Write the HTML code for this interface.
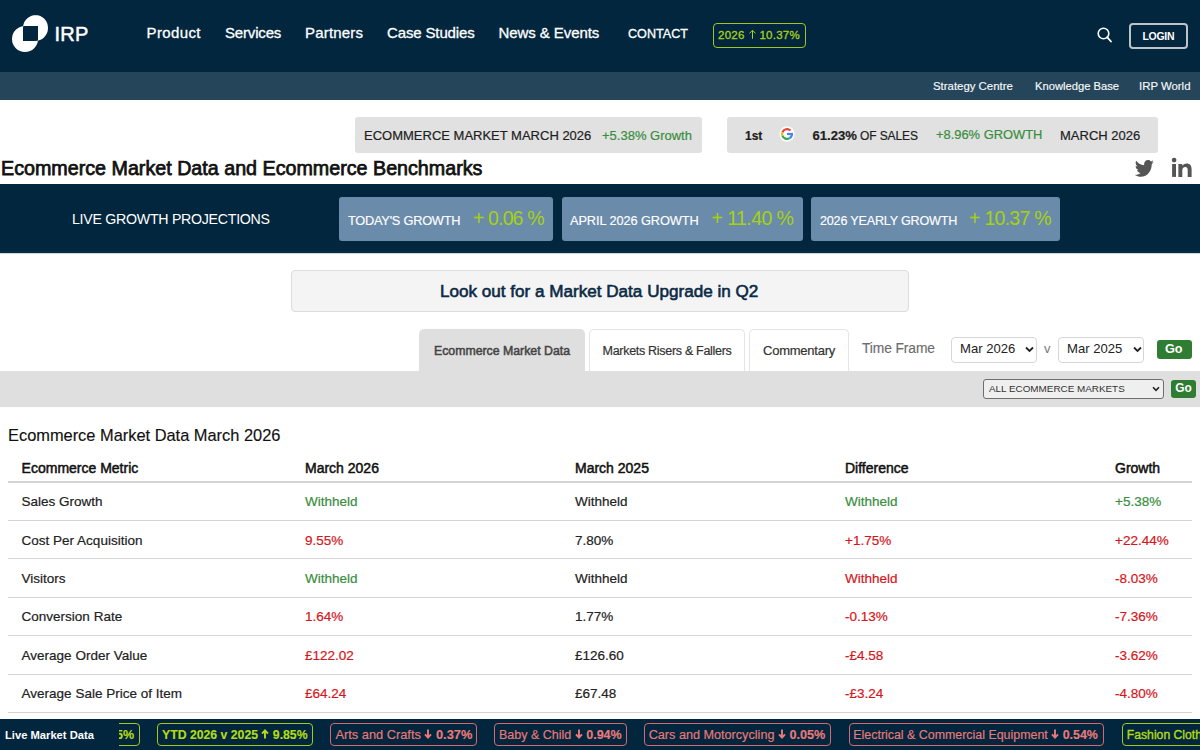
<!DOCTYPE html>
<html><head><meta charset="utf-8">
<style>
*{box-sizing:border-box;margin:0;padding:0}
html,body{width:1200px;height:750px;overflow:hidden;background:#fff;font-family:"Liberation Sans",sans-serif;position:relative}
.a{position:absolute;white-space:nowrap;line-height:1}
#hdr{position:absolute;left:0;top:0;width:1200px;height:72px;background:#02263d}
#sub{position:absolute;left:0;top:72px;width:1200px;height:28px;background:#25465a}
.nav{color:#fff;font-size:15px;top:24.6px;-webkit-text-stroke:0.3px #fff}
.subn{color:#f4f6f8;font-size:11.4px;top:81px;-webkit-text-stroke:0.15px #fff}
.tbox{position:absolute;top:117px;height:36px;background:#e1e1e1;border-radius:3px}
.tk{font-size:13px;color:#1e1e1e;top:129px;-webkit-text-stroke:0.2px currentColor}
.grn{color:#388e3c}
#band{position:absolute;left:0;top:184px;width:1200px;height:69px;background:#02263d}
.gbox{position:absolute;top:197px;height:44px;background:#6b8bab;border-radius:3px}
.glab{color:#fff;font-size:13px;top:215px;-webkit-text-stroke:0.15px #fff}
.gval{color:#a6d20f;font-size:18.3px;top:211px}
#banner{position:absolute;left:291px;top:270px;width:618px;height:42px;background:#f4f4f4;border:1px solid #dcdcdc;border-radius:4px}
.tab{position:absolute;top:329px;height:42px;background:#fff;border:1px solid #e4e4e4;border-bottom:none;border-radius:5px 5px 0 0}
.tabt{font-size:12.6px;color:#333;top:345px;-webkit-text-stroke:0.2px currentColor}
#gray{position:absolute;left:0;top:371px;width:1200px;height:36px;background:#dfdfdf}
.sel{position:absolute;background:#fff;border:1px solid #d6d6d6;border-radius:4px}
.go{position:absolute;background:#2e7d32;border-radius:3px}
.th{font-size:14px;-webkit-text-stroke:0.5px #111;color:#111;top:461px}
.td{font-size:13.5px;color:#222;-webkit-text-stroke:0.2px currentColor}
.red{color:#d5161c}
.g2{color:#3a8d3e}
.rl{position:absolute;left:8px;width:1184px;height:1px;background:#d4d4d4}
#tick{position:absolute;left:0;top:719px;width:1200px;height:31px;background:#02263d}
.pill{position:absolute;top:723px;height:23px;border:1px solid #a6c81c;border-radius:4px}
.pt{font-size:12.5px;top:729px;-webkit-text-stroke:0.15px currentColor}
.pk{border-color:#d9686e}
.ar{display:inline-block;vertical-align:0px}
.lime{color:#b4dc14}
.pink{color:#ea7a7a}
</style></head><body>
<div id="hdr"></div>
<div id="sub"></div>
<!-- logo -->
<svg class="a" style="left:0;top:0" width="100" height="70" viewBox="0 0 100 70">
<path fill="#fff" fill-rule="evenodd" d="M23,41 L23,28 A13,13 0 0 1 36,15 L35.5,15 A12.5,13 0 0 1 48,28 A13,13 0 0 1 35,41 Z M12,39 A13,13 0 0 1 25,26 L38,26 L38,39 A13,13 0 0 1 25,52 A13,13 0 0 1 12,39 Z"/>
</svg>
<div class="a" style="left:54.5px;top:24px;color:#fff;font-size:20px;letter-spacing:0.2px;-webkit-text-stroke:0.5px #fff">IRP</div>
<div class="a nav" style="left:146.5px;letter-spacing:0.38px">Product</div>
<div class="a nav" style="left:225px;letter-spacing:-0.17px">Services</div>
<div class="a nav" style="left:305px;letter-spacing:0.19px">Partners</div>
<div class="a nav" style="left:387px;letter-spacing:-0.14px">Case Studies</div>
<div class="a nav" style="left:498.5px;letter-spacing:-0.08px">News &amp; Events</div>
<div class="a nav" style="left:628px;font-size:12.6px;top:28.3px">CONTACT</div>
<div class="a" style="left:713px;top:23px;width:93px;height:25px;border:1.2px solid #a2c41c;border-radius:4px"></div>
<div class="a" style="left:718px;top:29.4px;color:#a8d11a;font-size:11.5px;letter-spacing:0.25px;-webkit-text-stroke:0.3px #a8d11a">2026 <svg class="ar" width="8" height="10" viewBox="0 0 8 10" style="vertical-align:-0.5px"><path d="M4.5,9.8V1.4M1.5,4.4L4.5,1.3L7.5,4.4" fill="none" stroke="currentColor" stroke-width="1"/></svg> 10.37%</div>
<svg class="a" style="left:1095px;top:24.5px" width="20" height="20" viewBox="0 0 20 20"><circle cx="8.5" cy="8.5" r="5.3" fill="none" stroke="#fff" stroke-width="1.6"/><path d="M12.3,12.3 L16,16.5" stroke="#fff" stroke-width="1.8" stroke-linecap="round"/></svg>
<div class="a" style="left:1129px;top:23px;width:59px;height:25.5px;border:2px solid #bcc4ca;border-radius:4px"></div>
<div class="a" style="left:1142.5px;top:31px;color:#fff;font-size:10.5px;letter-spacing:-0.3px;font-weight:700">LOGIN</div>
<div class="a subn" style="left:933px">Strategy Centre</div>
<div class="a subn" style="left:1035px;font-size:11.2px">Knowledge Base</div>
<div class="a subn" style="left:1139px">IRP World</div>

<!-- ticker boxes -->
<div class="tbox" style="left:355px;width:347px"></div>
<div class="a tk" style="left:364px">ECOMMERCE MARKET MARCH 2026</div>
<div class="a tk grn" style="left:602px">+5.38% Growth</div>
<div class="tbox" style="left:727px;width:431px"></div>
<div class="a tk" style="left:745px;font-weight:700;font-size:12px;top:129.8px">1st</div>
<svg class="a" style="left:779.4px;top:126px" width="16" height="16" viewBox="0 0 16 16"><circle cx="8" cy="8" r="7.7" fill="#fff"/>
<path d="M3.40,6.32 A4.9,4.9 0 0 1 11.46,4.54" fill="none" stroke="#EA4335" stroke-width="2.2"/>
<path d="M3.40,9.68 A4.9,4.9 0 0 1 3.40,6.32" fill="none" stroke="#FBBC05" stroke-width="2.2"/>
<path d="M10.45,12.24 A4.9,4.9 0 0 1 3.40,9.68" fill="none" stroke="#34A853" stroke-width="2.2"/>
<path d="M12.9,7.9 A4.9,4.9 0 0 1 10.45,12.24" fill="none" stroke="#4285F4" stroke-width="2.2"/>
<rect x="8" y="6.9" width="6" height="2.2" fill="#4285F4"/>
</svg>
<div class="a tk" style="left:812.5px;font-weight:700;font-size:13.1px;top:128.9px">61.23%</div>
<div class="a tk" style="left:860px;font-size:12px;top:129.8px;letter-spacing:-0.1px">OF SALES</div>
<div class="a tk grn" style="left:936px;font-size:12.9px">+8.96% GROWTH</div>
<div class="a tk" style="left:1060px">MARCH 2026</div>

<div class="a" style="left:1px;top:158.9px;font-size:19.7px;-webkit-text-stroke:0.75px #111;color:#111">Ecommerce Market Data and Ecommerce Benchmarks</div>

<svg class="a" style="left:1135.4px;top:158px" width="19.2" height="21" viewBox="0 0 24 24" preserveAspectRatio="none"><path fill="#555" d="M23.6,4.6c-.9.4-1.8.6-2.8.8 1-.6 1.8-1.5 2.1-2.7-.9.6-2,1-3.1,1.2C18.9,2.9 17.6,2.3 16.2,2.3c-2.7,0-4.8,2.2-4.8,4.8 0,.4,0,.8.1,1.1C7.4,8 3.9,6.1 1.5,3.1c-.4.7-.7,1.6-.7,2.4 0,1.7.9,3.2,2.2,4-.8,0-1.5-.2-2.2-.6v.1c0,2.3 1.7,4.3 3.9,4.7-.4.1-.8.2-1.3.2-.3,0-.6,0-.9-.1.6,1.9 2.4,3.3 4.5,3.4-1.7,1.3-3.7,2.1-6,2.1-.4,0-.8,0-1.2-.1 2.1,1.4 4.7,2.2 7.4,2.2 8.9,0 13.7-7.4 13.7-13.7v-.6c1-.7 1.8-1.5 2.4-2.5z"/></svg>
<svg class="a" style="left:1168px;top:155px" width="28" height="25" viewBox="0 0 28 25"><circle cx="6.1" cy="5.1" r="2.35" fill="#555"/><rect x="4.1" y="9" width="3.9" height="12.9" fill="#555"/><path fill="#555" d="M10.4,9 H14.2 V10.8 C15,9.3 16.5,8.4 18.6,8.4 C22,8.4 23.6,10.5 23.6,14.3 V21.9 H19.7 V15 C19.7,13.2 19.1,11.9 17.4,11.9 C15.6,11.9 14.3,13.1 14.3,15.2 V21.9 H10.4 Z"/></svg>
<div id="band"></div>
<div class="a" style="left:0;top:251px;width:1200px;height:2px;background:#062a44"></div>
<div class="a" style="left:0;top:253px;width:1200px;height:1px;background:#d2d8da"></div>
<div class="a" style="left:72px;top:212px;color:#fff;font-size:14.2px;letter-spacing:-0.28px">LIVE GROWTH PROJECTIONS</div>
<div class="gbox" style="left:339px;width:214px"></div>
<div class="gbox" style="left:562px;width:241px"></div>
<div class="gbox" style="left:811px;width:249px"></div>
<div class="a glab" style="left:348px;font-size:13.2px;letter-spacing:-0.25px;top:215.3px;font-size:12.8px">TODAY'S GROWTH</div>
<div class="a gval" style="left:473px;font-size:19.6px;letter-spacing:-0.9px;top:209.4px">+ 0.06 %</div>
<div class="a glab" style="left:570px;font-size:13.2px;letter-spacing:-0.1px;top:215.3px;font-size:12.8px">APRIL 2026 GROWTH</div>
<div class="a gval" style="left:711.5px;font-size:19.6px;letter-spacing:-0.6px;top:209.4px">+ 11.40 %</div>
<div class="a glab" style="left:820px;font-size:13.2px;letter-spacing:-0.2px;top:215.3px;font-size:12.6px">2026 YEARLY GROWTH</div>
<div class="a gval" style="left:969px;font-size:19.6px;letter-spacing:-0.75px;top:209.4px">+ 10.37 %</div>

<div id="banner"></div>
<div class="a" style="left:440px;top:283.3px;font-size:17.1px;-webkit-text-stroke:0.6px #0b2a45;color:#0b2a45">Look out for a Market Data Upgrade in Q2</div>

<div id="gray"></div>
<div class="tab" style="left:419px;width:166px;background:#dfdfdf;border-color:#dfdfdf"></div>
<div class="tab" style="left:589px;width:156px"></div>
<div class="tab" style="left:749px;width:100px"></div>
<div class="a tabt" style="left:434px;font-size:12.3px;color:#444;-webkit-text-stroke:0.5px #444;top:345.3px">Ecommerce Market Data</div>
<div class="a tabt" style="left:602.6px;font-size:12.5px;letter-spacing:-0.3px;top:344.6px">Markets Risers &amp; Fallers</div>
<div class="a tabt" style="left:763px;font-size:13px;letter-spacing:-0.24px;top:344.3px">Commentary</div>
<div class="a" style="left:862px;top:341.6px;font-size:13.8px;letter-spacing:-0.1px;color:#6c6c6c;-webkit-text-stroke:0.15px #6c6c6c">Time Frame</div>
<div class="sel" style="left:951px;top:336.5px;width:86px;height:26px"></div>
<div class="a" style="left:960px;top:342px;font-size:13.1px;color:#222">Mar 2026</div>
<svg class="a" style="left:1025px;top:346px" width="9" height="7" viewBox="0 0 9 7"><path d="M1,1.5 L4.5,5 L8,1.5" fill="none" stroke="#222" stroke-width="1.8"/></svg>
<div class="a" style="left:1044px;top:342px;font-size:13px;color:#777">v</div>
<div class="sel" style="left:1058px;top:336.5px;width:86px;height:26px"></div>
<div class="a" style="left:1067px;top:342px;font-size:13.1px;color:#222">Mar 2025</div>
<svg class="a" style="left:1132.5px;top:346px" width="9" height="7" viewBox="0 0 9 7"><path d="M1,1.5 L4.5,5 L8,1.5" fill="none" stroke="#222" stroke-width="1.8"/></svg>
<div class="go" style="left:1157px;top:340px;width:35px;height:19px"></div>
<div class="a" style="left:1165px;top:343px;font-size:12.7px;font-weight:700;color:#fff">Go</div>
<div class="a" style="left:982.5px;top:379px;width:181px;height:20px;background:#efefef;border:1.3px solid #6e6e6e;border-radius:3px"></div>
<div class="a" style="left:989px;top:384px;font-size:9.9px;color:#333">ALL ECOMMERCE MARKETS</div>
<svg class="a" style="left:1152px;top:386px" width="8" height="6" viewBox="0 0 8 6"><path d="M1,1.2 L4,4.3 L7,1.2" fill="none" stroke="#222" stroke-width="1.6"/></svg>
<div class="go" style="left:1171px;top:380px;width:25px;height:18px"></div>
<div class="a" style="left:1175.3px;top:383.3px;font-size:11.9px;font-weight:700;color:#fff">Go</div>

<div class="a" style="left:8px;top:426.8px;font-size:16.4px;color:#111;-webkit-text-stroke:0.15px #111">Ecommerce Market Data March 2026</div>
<div class="rl" style="top:481px;height:2px"></div>
<div class="a th" style="left:21.6px">Ecommerce Metric</div>
<div class="a th" style="left:305px">March 2026</div>
<div class="a th" style="left:575px">March 2025</div>
<div class="a th" style="left:845px">Difference</div>
<div class="a th" style="left:1115px">Growth</div>
<div class="a td" style="left:21.6px;top:495.2px">Sales Growth</div>
<div class="a td g2" style="left:305px;top:495.2px">Withheld</div>
<div class="a td " style="left:575px;top:495.2px">Withheld</div>
<div class="a td g2" style="left:845px;top:495.2px">Withheld</div>
<div class="a td g2" style="left:1115px;top:495.2px">+5.38%</div>
<div class="rl" style="top:520.0px"></div>
<div class="a td" style="left:21.6px;top:533.6px">Cost Per Acquisition</div>
<div class="a td red" style="left:305px;top:533.6px">9.55%</div>
<div class="a td " style="left:575px;top:533.6px">7.80%</div>
<div class="a td red" style="left:845px;top:533.6px">+1.75%</div>
<div class="a td red" style="left:1115px;top:533.6px">+22.44%</div>
<div class="rl" style="top:558.4px"></div>
<div class="a td" style="left:21.6px;top:572.0px">Visitors</div>
<div class="a td g2" style="left:305px;top:572.0px">Withheld</div>
<div class="a td " style="left:575px;top:572.0px">Withheld</div>
<div class="a td red" style="left:845px;top:572.0px">Withheld</div>
<div class="a td red" style="left:1115px;top:572.0px">-8.03%</div>
<div class="rl" style="top:596.8px"></div>
<div class="a td" style="left:21.6px;top:610.4px">Conversion Rate</div>
<div class="a td red" style="left:305px;top:610.4px">1.64%</div>
<div class="a td " style="left:575px;top:610.4px">1.77%</div>
<div class="a td red" style="left:845px;top:610.4px">-0.13%</div>
<div class="a td red" style="left:1115px;top:610.4px">-7.36%</div>
<div class="rl" style="top:635.2px"></div>
<div class="a td" style="left:21.6px;top:648.8px">Average Order Value</div>
<div class="a td red" style="left:305px;top:648.8px">£122.02</div>
<div class="a td " style="left:575px;top:648.8px">£126.60</div>
<div class="a td red" style="left:845px;top:648.8px">-£4.58</div>
<div class="a td red" style="left:1115px;top:648.8px">-3.62%</div>
<div class="rl" style="top:673.6px"></div>
<div class="a td" style="left:21.6px;top:687.2px">Average Sale Price of Item</div>
<div class="a td red" style="left:305px;top:687.2px">£64.24</div>
<div class="a td " style="left:575px;top:687.2px">£67.48</div>
<div class="a td red" style="left:845px;top:687.2px">-£3.24</div>
<div class="a td red" style="left:1115px;top:687.2px">-4.80%</div>
<div class="rl" style="top:712.0px"></div>

<div id="tick"></div>
<div class="pill" style="left:100px;width:40px"></div>
<div class="a pt lime" style="left:119px;width:40px;overflow:hidden;text-indent:-3px"><b>5%</b></div>
<div class="pill" style="left:157px;width:156px"></div>
<div class="a pt lime" style="left:162px;font-size:12.25px;top:729.3px"><b>YTD 2026 v 2025 <svg class="ar" width="8" height="10" viewBox="0 0 8 10"><path d="M4,9.6V1.6M1,4.6L4,1.4L7,4.6" fill="none" stroke="currentColor" stroke-width="1.9"/></svg> 9.85%</b></div>
<div class="pill pk" style="left:330px;width:147px"></div>
<div class="a pt pink" style="left:335.5px;font-size:12.8px;top:728.7px">Arts and Crafts <svg class="ar" width="8" height="10" viewBox="0 0 8 10"><path d="M4,0.4V8.4M1,5.4L4,8.6L7,5.4" fill="none" stroke="currentColor" stroke-width="1.9"/></svg> <b>0.37%</b></div>
<div class="pill pk" style="left:494px;width:133px"></div>
<div class="a pt pink" style="left:499px">Baby &amp; Child <svg class="ar" width="8" height="10" viewBox="0 0 8 10"><path d="M4,0.4V8.4M1,5.4L4,8.6L7,5.4" fill="none" stroke="currentColor" stroke-width="1.9"/></svg> <b>0.94%</b></div>
<div class="pill pk" style="left:643.5px;width:187.5px"></div>
<div class="a pt pink" style="left:648.7px;font-size:12.65px;top:728.8px">Cars and Motorcycling <svg class="ar" width="8" height="10" viewBox="0 0 8 10"><path d="M4,0.4V8.4M1,5.4L4,8.6L7,5.4" fill="none" stroke="currentColor" stroke-width="1.9"/></svg> <b>0.05%</b></div>
<div class="pill pk" style="left:848.5px;width:255px"></div>
<div class="a pt pink" style="left:853.3px;font-size:12.42px;top:729.1px">Electrical &amp; Commercial Equipment <svg class="ar" width="8" height="10" viewBox="0 0 8 10"><path d="M4,0.4V8.4M1,5.4L4,8.6L7,5.4" fill="none" stroke="currentColor" stroke-width="1.9"/></svg> <b>0.54%</b></div>
<div class="pill" style="left:1121.5px;width:120px"></div>
<div class="a pt lime" style="left:1126.8px;font-size:12.2px;-webkit-text-stroke:0.35px currentColor">Fashion Clothing</div>
<div class="a" style="left:0;top:719px;width:119px;height:31px;background:#02263d"></div>
<div class="a" style="left:5px;top:730px;font-size:11.2px;font-weight:700;color:#fff">Live Market Data</div>
</body></html>
